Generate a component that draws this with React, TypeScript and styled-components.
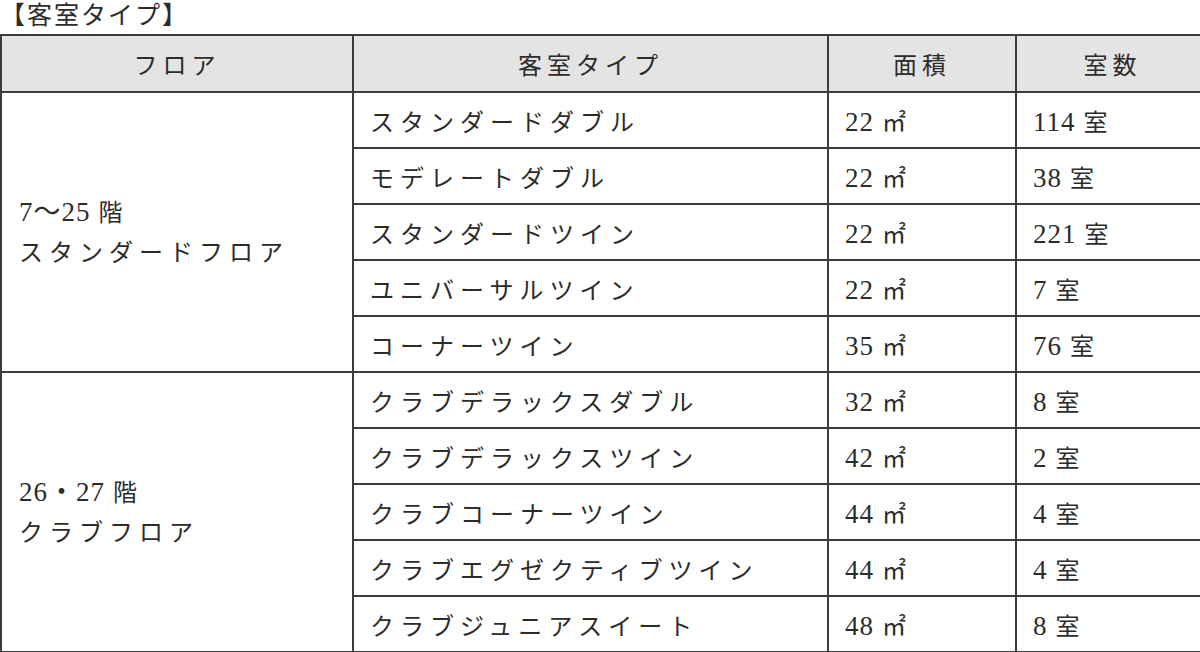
import React from "react";
import styled, { createGlobalStyle } from "styled-components";

const GlobalStyle = createGlobalStyle`
    html, body {
        margin: 0;
        padding: 0;
        background: #fff;
    }
    body {
        font-family: "Liberation Serif", "Noto Sans CJK JP", serif;
        color: #2c2c2c;
    }
`;

const Page = styled.div`
    width: 1200px;
    display: flex;
    flex-direction: column;
`;

const Title = styled.div`
    height: 34px;
    line-height: 32px;
    font-size: 25px;
    letter-spacing: 2px;
    color: #2c2c2c;
`;

const Table = styled.table`
    width: 1200px;
    border-collapse: collapse;
    table-layout: fixed;
    font-size: 24px;
`;

const HeadCell = styled.th<{ $w: number }>`
    width: ${(p) => p.$w}px;
    height: 55px;
    background: #e4e4e4;
    border: 2px solid #3c3c3c;
    font-weight: 400;
    text-align: center;
    letter-spacing: 5px;
    padding: 0;
`;

const Cell = styled.td`
    height: 54px;
    border: 2px solid #3c3c3c;
    padding: 0 0 0 16px;
    letter-spacing: 6px;
    vertical-align: middle;
    white-space: nowrap;
`;

const FloorCell = styled(Cell)`
    line-height: 40px;
    padding-left: 17px;
    letter-spacing: 6px;
`;

const Num = styled.span`
    font-size: 27px;
    letter-spacing: 1px;
    margin-right: 8px;
`;

type Room = { name: string; area: number; count: number };

const groups: { floor: string; label: string; rooms: Room[] }[] = [
    {
        floor: "7〜25",
        label: "スタンダードフロア",
        rooms: [
            { name: "スタンダードダブル", area: 22, count: 114 },
            { name: "モデレートダブル", area: 22, count: 38 },
            { name: "スタンダードツイン", area: 22, count: 221 },
            { name: "ユニバーサルツイン", area: 22, count: 7 },
            { name: "コーナーツイン", area: 35, count: 76 },
        ],
    },
    {
        floor: "26・27",
        label: "クラブフロア",
        rooms: [
            { name: "クラブデラックスダブル", area: 32, count: 8 },
            { name: "クラブデラックスツイン", area: 42, count: 2 },
            { name: "クラブコーナーツイン", area: 44, count: 4 },
            { name: "クラブエグゼクティブツイン", area: 44, count: 4 },
            { name: "クラブジュニアスイート", area: 48, count: 8 },
        ],
    },
];

export default function App() {
    return (
        <Page>
            <GlobalStyle />
            <Title>【客室タイプ】</Title>
            <Table>
                <thead>
                    <tr>
                        <HeadCell $w={350}>フロア</HeadCell>
                        <HeadCell $w={473}>客室タイプ</HeadCell>
                        <HeadCell $w={186}>面積</HeadCell>
                        <HeadCell $w={191}>室数</HeadCell>
                    </tr>
                </thead>
                <tbody>
                    {groups.map((g) =>
                        g.rooms.map((r, i) => (
                            <tr key={g.floor + r.name}>
                                {i === 0 && (
                                    <FloorCell rowSpan={g.rooms.length}>
                                        <Num>{g.floor}</Num>階
                                        <br />
                                        {g.label}
                                    </FloorCell>
                                )}
                                <Cell>{r.name}</Cell>
                                <Cell>
                                    <Num>{r.area}</Num>㎡
                                </Cell>
                                <Cell>
                                    <Num>{r.count}</Num>室
                                </Cell>
                            </tr>
                        ))
                    )}
                </tbody>
            </Table>
        </Page>
    );
}
